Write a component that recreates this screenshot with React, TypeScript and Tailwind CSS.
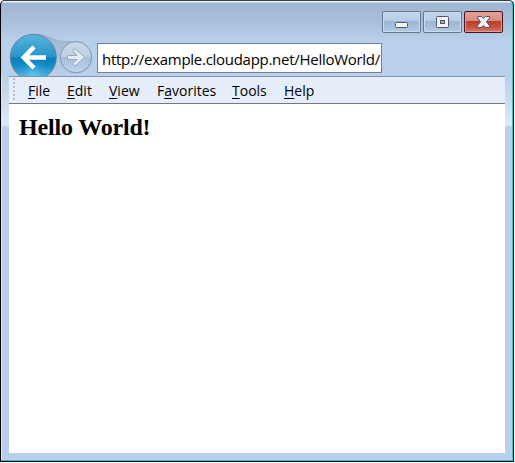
import React from "react";

const menus = [
  { before: "", key: "F", after: "ile", cls: "w-[39px]" },
  { before: "", key: "E", after: "dit", cls: "w-[42px]" },
  { before: "", key: "V", after: "iew", cls: "w-[48px]" },
  { before: "F", key: "a", after: "vorites", cls: "w-[75px]" },
  { before: "", key: "T", after: "ools", cls: "w-[52px]" },
  { before: "", key: "H", after: "elp", cls: "w-[40px]" },
];

const buttonBase = "flex h-[22px] w-[39px] items-center justify-center rounded-[2px] border";
const blueButton =
  "border-[#65778e] bg-[linear-gradient(#c5d8eb_0%,#b6cce4_45%,#9bb5d2_46%,#b2cae5_100%)] shadow-[inset_0_0_0_1px_#cbdced]";

function WindowButtons() {
  return (
    <div className="flex h-[22px] justify-end gap-[2px] pr-[9px]">
      <button className={`${buttonBase} ${blueButton}`} aria-label="Minimize">
        <svg width="37" height="20" viewBox="0 0 37 20">
          <rect x="12.5" y="10.5" width="12" height="5" rx="1" fill="#f5f5f5" stroke="#535666" />
        </svg>
      </button>
      <button className={`${buttonBase} ${blueButton}`} aria-label="Maximize">
        <svg width="37" height="20" viewBox="0 0 37 20">
          <rect x="12.5" y="4.5" width="12" height="11" rx="1" fill="#f3f3f3" stroke="#535666" />
          <rect x="16.5" y="8.5" width="4" height="3" fill="#9bb5d1" stroke="#535666" />
        </svg>
      </button>
      <button
        className={`${buttonBase} border-[#481522] bg-[linear-gradient(#e6a59b_0%,#d9877b_45%,#b93d28_46%,#c95a43_80%,#d98270_100%)] shadow-[inset_0_0_0_1px_#e39b8f]`}
        aria-label="Close"
      >
        <svg width="37" height="20" viewBox="0 0 37 20">
          <path
            d="M12.5 4.5H16.5L18.5 6.5L20.5 4.5H24.5V6L21.5 9.8L24.5 13.8V15.5H20.5L18.5 13.3L16.5 15.5H12.5V13.8L15.5 9.8L12.5 6Z"
            fill="#f6f4f4"
            stroke="#59556a"
            strokeLinejoin="round"
          />
        </svg>
      </button>
    </div>
  );
}

function Navigation() {
  return (
    <svg className="block shrink-0" width="88" height="43" viewBox="9 33 88 43">
      <defs>
        <linearGradient id="back" x1="0" y1="0" x2="0" y2="1">
          <stop offset="0" stopColor="#58b4dc" />
          <stop offset=".48" stopColor="#2795ca" />
          <stop offset=".52" stopColor="#0780bd" />
          <stop offset=".7" stopColor="#168dc8" />
          <stop offset="1" stopColor="#6bcaf0" />
        </linearGradient>
        <radialGradient id="glow" cx=".5" cy=".95" r=".45">
          <stop stopColor="#72cff2" />
          <stop offset="1" stopColor="#168dc8" stopOpacity="0" />
        </radialGradient>
        <linearGradient id="forward" x1="0" y1="0" x2="0" y2="1">
          <stop offset="0" stopColor="#cad9ea" />
          <stop offset=".49" stopColor="#bdcfe3" />
          <stop offset=".51" stopColor="#a6bed9" />
          <stop offset="1" stopColor="#bfd5ed" />
        </linearGradient>
        <linearGradient id="bridge" x1="0" y1="0" x2="0" y2="1">
          <stop offset="0" stopColor="#9db3ce" />
          <stop offset="1" stopColor="#b9d0ea" />
        </linearGradient>
      </defs>
      <path d="M36 34C51 35 51 42 70 41.5L77 41V73L58 76H42Z" fill="url(#bridge)" />
      <path d="M36 34C51 35 51 42 70 41.5" fill="none" stroke="#91a9c5" strokeWidth=".7" />
      <circle cx="33.3" cy="57.3" r="23" fill="url(#back)" stroke="#66839c" />
      <circle cx="33.3" cy="57.3" r="22.2" fill="url(#glow)" />
      <path d="M34 47L23.8 57.5L34 68M24 57.5H46" fill="none" stroke="white" strokeWidth="4.6" />
      <circle cx="76" cy="57.2" r="15.7" fill="url(#forward)" stroke="#8294a9" />
      <path
        d="M67.5 55.5H77L72.5 50.5L75 48.8L84.5 57.3L75 66L72.5 64L77 59.5H67.5Z"
        fill="#e3ebf4"
        stroke="#8b9cb0"
        strokeWidth=".8"
        strokeLinejoin="round"
      />
    </svg>
  );
}

export default function App() {
  return (
    <div className="flex h-[463px] w-[515px] overflow-hidden bg-white pb-px pr-px">
      <div className="flex w-full rounded-t-[5px] bg-black pb-px pl-px pr-px">
        <div className="flex w-full flex-col rounded-t-[5px] border-b border-r border-[#22c9e7] bg-[linear-gradient(#3c3a43_0px,#3c3a43_1px,#edf4fb_1px,#edf4fb_2px,#9db6d3_3px,#a5bdd9_18px,#b9d0ea_42px,#b9d0ea_100%)]">
          <div className="pt-[11px]">
            <WindowButtons />
          </div>
          <div className="flex h-[43px] pl-[8px]">
            <Navigation />
            <div className="mt-[10px] flex h-[30px] w-[285px] items-center overflow-hidden border border-[#718298] bg-white pl-[4px] pt-[2px]">
              <span className="whitespace-nowrap font-['Open_Sans','Noto_Sans',sans-serif] text-[15px] leading-5 tracking-[-0.28px] text-black">
                http://example.cloudapp.net/HelloWorld/
              </span>
            </div>
          </div>
          <div className="flex grow">
            <div className="w-[8px] border-l border-[#d9e8f6] bg-[linear-gradient(#b9d0ea_0px,#dce9f8_49px,#b9d0ea_51px)]" />
            <div className="flex grow flex-col">
              <div className="flex h-[28px] items-center border-b border-t border-[#74777f] border-t-[#8292a9] bg-[#e6eefa]">
                <svg className="mr-[12px] shrink-0" width="7" height="26" viewBox="0 0 7 26">
                  <path d="M5 1V25" stroke="#b6becb" strokeWidth="2" strokeDasharray="2 2" />
                </svg>
                <nav className="flex pt-[2px] font-['Open_Sans','Noto_Sans',sans-serif] text-[14px] leading-5 tracking-[0px] text-black">
                  {menus.map((menu) => (
                    <span className={`${menu.cls} whitespace-nowrap`} key={menu.key}>
                      {menu.before}
                      <span className="underline decoration-1 underline-offset-2">{menu.key}</span>
                      {menu.after}
                    </span>
                  ))}
                </nav>
              </div>
              <main className="grow bg-white pl-[10px] pt-[9px]">
                <h1 className="whitespace-nowrap font-['Liberation_Serif',serif] text-[24px] font-bold leading-[28px] tracking-[-0.18px] text-black">
                  Hello World!
                </h1>
              </main>
              <div className="h-[7px]" />
            </div>
            <div className="w-[7px] bg-[linear-gradient(#b9d0ea_0px,#dce9f8_49px,#b9d0ea_51px)]" />
          </div>
        </div>
      </div>
    </div>
  );
}
